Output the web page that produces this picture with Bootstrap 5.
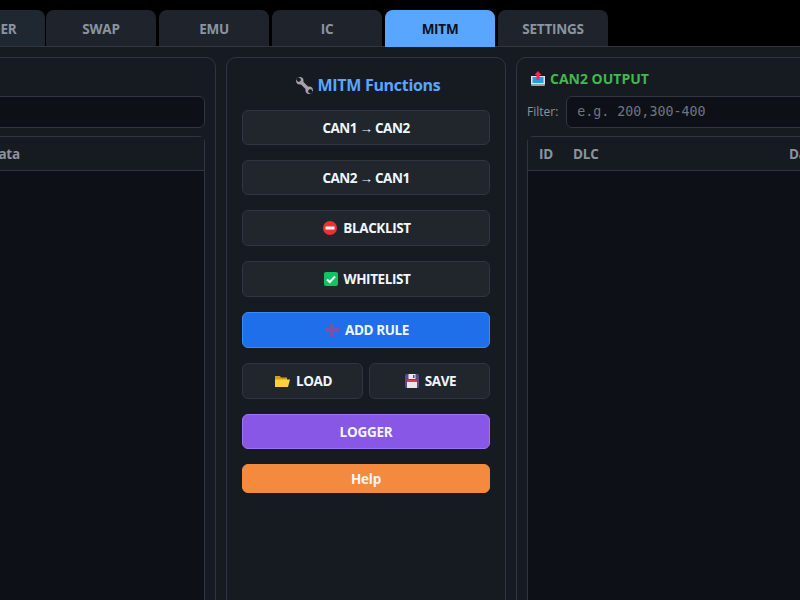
<!DOCTYPE html>
<html lang="en">
<head>
<meta charset="utf-8">
<title>MITM</title>
<link href="https://cdn.jsdelivr.net/npm/bootstrap@5.3.0/dist/css/bootstrap.min.css" rel="stylesheet">
<style>
html,body{background:#000;height:600px;overflow:hidden;}
body{font-family:"Open Sans","Noto Sans",sans-serif;width:800px;}
.tabbar{height:46px;padding-top:10px;margin-left:-65px;gap:3px;}
.tabitem{width:110px;height:36px;padding-top:2px;border-radius:8px 8px 0 0;background:#1f242c;color:#8b949e;font-weight:700;font-size:13.5px;letter-spacing:-.25px;}
.tabitem.first{margin-right:-2px;background:#1f2831;}
.tabitem.on{background:#58a6ff;color:#0d1117;height:37px;padding-bottom:1px;margin-bottom:-1px;position:relative;z-index:2;}
.stage{background:#161b22;border-top:1px solid #30363d;height:554px;padding:10px 0 0 0;gap:10px;margin-left:-200px;width:1300px;}
.pane{background:#161b22;border:1px solid #30363d;border-radius:10px;height:600px;flex:none;}
.pane-left{width:416px;padding:38px 10px 0 11px;}
.pane-mid{width:280px;padding:15px 15px 0 15px;}
.pane-right{width:560px;padding:10px 10px 0 10px;}
.mid-title{height:24px;margin-bottom:13px;padding-left:4px;font-size:16px;letter-spacing:-.3px;font-weight:700;color:#58a6ff;gap:5px;}
.out-title{height:20px;margin-bottom:8px;padding-left:4px;font-size:14px;font-weight:700;color:#3fb950;gap:5px;}
.filter-label{font-size:12px;color:#8b949e;}
.filter-box{height:32px;background:#0d1117;border:1px solid #30363d;border-radius:6px;padding:0 10px;font-family:"DejaVu Sans Mono",monospace;font-size:13.3px;color:#6e7681;}
.datatable{margin-top:8px;background:#0d1117;border:1px solid #30363d;border-radius:6px 6px 0 0;height:500px;}
.datahead{height:34px;padding-top:1px;background:#161b22;border-bottom:1px solid #30363d;color:#8b949e;font-size:13.5px;letter-spacing:-.2px;font-weight:700;}
.head-left{padding-right:184px;}
.head-right{padding-left:11px;}
.c-id{width:34px;}
.c-dlc{width:216px;}
.fn{height:35px;padding:0;border:1px solid #30363d;border-radius:6px;background:#21262d;color:#f0f6fc;font-size:13.5px;letter-spacing:-.25px;font-weight:700;gap:6px;}
.fn.tall{height:36px;letter-spacing:-.4px;padding-left:2px;}
.fn.plain{padding-top:2px;}
.fn.route{letter-spacing:-.5px;word-spacing:-.5px;}
.fn:hover{background:#21262d;color:#f0f6fc;border-color:#30363d;}
.fn-blue{background:#1f6feb;border-color:#388bfd;}
.fn-blue:hover{background:#1f6feb;border-color:#388bfd;}
.fn-purple{background:#8957e5;border-color:#a371f7;}
.fn-purple:hover{background:#8957e5;border-color:#a371f7;}
.fn-orange{height:29px;background:#f48a3e;border-color:#f48a3e;}
.fn-orange:hover{background:#f48a3e;border-color:#f48a3e;}
.fn-stack{gap:15px;}
.fn-pair{gap:6px;}
</style>
</head>
<body>
<div class="tabbar d-flex align-items-start">
  <div class="tabitem first d-flex align-items-center justify-content-center flex-shrink-0">LOGGER</div>
  <div class="tabitem d-flex align-items-center justify-content-center flex-shrink-0">SWAP</div>
  <div class="tabitem d-flex align-items-center justify-content-center flex-shrink-0">EMU</div>
  <div class="tabitem d-flex align-items-center justify-content-center flex-shrink-0">IC</div>
  <div class="tabitem on d-flex align-items-center justify-content-center flex-shrink-0">MITM</div>
  <div class="tabitem d-flex align-items-center justify-content-center flex-shrink-0">SETTINGS</div>
</div>
<div class="stage d-flex">
  <section class="pane pane-left">
    <div class="filter-box"></div>
    <div class="datatable">
      <div class="datahead head-left d-flex align-items-center justify-content-end"><span>Data</span></div>
    </div>
  </section>
  <section class="pane pane-mid">
    <div class="mid-title d-flex align-items-center justify-content-center">
      <svg width="17" height="17" viewBox="0 0 17 17"><path d="M4 4 13 13" stroke="#aaa0aa" stroke-width="3.600"/><circle cx="3.800" cy="3.800" r="3.700" fill="#aaa0aa"/><circle cx="13.200" cy="13.200" r="3.700" fill="#aaa0aa"/><path d="M0 2 2 0 4.800 1.800 4.800 3.400 3.400 4.800 1.800 4.800Z" fill="#161b22"/><path d="M17 15 15 17 12.200 15.200 12.200 13.600 13.600 12.200 15.200 12.200Z" fill="#161b22"/></svg>
      <span>MITM Functions</span>
    </div>
    <div class="fn-stack d-flex flex-column">
      <button class="btn fn plain route d-flex align-items-center justify-content-center">CAN1 → CAN2</button>
      <button class="btn fn plain route d-flex align-items-center justify-content-center">CAN2 → CAN1</button>
      <button class="btn fn tall d-flex align-items-center justify-content-center">
        <svg width="14" height="14" viewBox="0 0 14 14"><circle cx="7" cy="7" r="7" fill="#f12f2f"/><rect x="2.500" y="5.500" width="9" height="3" fill="#fff"/></svg>BLACKLIST</button>
      <button class="btn fn tall d-flex align-items-center justify-content-center">
        <svg width="14" height="14" viewBox="0 0 14 14"><rect width="14" height="14" rx="2" fill="#0fc463"/><path d="M3 7.400 5.800 10 11 4.500" fill="none" stroke="#fff" stroke-width="2"/></svg>WHITELIST</button>
      <button class="btn fn fn-blue tall d-flex align-items-center justify-content-center">
        <svg width="14" height="14" viewBox="0 0 14 14"><path d="M5 0h4v5h5v4H9v5H5V9H0V5h5Z" fill="#7b52ab"/></svg>ADD RULE</button>
      <div class="fn-pair d-flex">
        <button class="btn fn tall flex-fill w-50 d-flex align-items-center justify-content-center">
          <svg width="15" height="14" viewBox="0 0 15 14"><path d="M0 2h5l1 1.500h6V6H0Z" fill="#d59a1d"/><path d="M0 13V5.500h15L13 13Z" fill="#fdd13c"/></svg>LOAD</button>
        <button class="btn fn tall flex-fill w-50 d-flex align-items-center justify-content-center">
          <svg width="14" height="14" viewBox="0 0 14 14"><rect width="14" height="14" rx="1.500" fill="#5b4a86"/><rect x="3.500" width="7" height="5" fill="#e8e6ea"/><rect x="8" y="1" width="1.500" height="3" fill="#5b4a86"/><rect x="2" y="6" width="10" height="8" fill="#e9e7eb"/><rect x="2" y="6" width="10" height="2" fill="#f0354b"/></svg>SAVE</button>
      </div>
      <button class="btn fn plain fn-purple d-flex align-items-center justify-content-center">LOGGER</button>
      <button class="btn fn plain fn-orange d-flex align-items-center justify-content-center">Help</button>
    </div>
  </section>
  <section class="pane pane-right">
    <div class="out-title d-flex align-items-center">
      <svg width="14" height="15" viewBox="0 0 14 15"><path d="M0 5h14v8.500H0Z" fill="#dfe3e6"/><rect x="1.500" y="6" width="11" height="6" fill="#1fa0dd"/><rect y="13" width="14" height="2" rx="1" fill="#9aa0a6"/><path d="M7 0 10.500 4H8.500V9h-3V4H3.500Z" fill="#f0285f"/></svg>
      <span>CAN2 OUTPUT</span>
    </div>
    <div class="d-flex align-items-center gap-2">
      <span class="filter-label">Filter:</span>
      <div class="filter-box flex-grow-1 d-flex align-items-center">e.g. 200,300-400</div>
    </div>
    <div class="datatable">
      <div class="datahead head-right d-flex align-items-center">
        <span class="c-id">ID</span><span class="c-dlc">DLC</span><span>Data</span>
      </div>
    </div>
  </section>
</div>
<script src="https://cdn.jsdelivr.net/npm/bootstrap@5.3.0/dist/js/bootstrap.bundle.min.js"></script>
</body>
</html>
